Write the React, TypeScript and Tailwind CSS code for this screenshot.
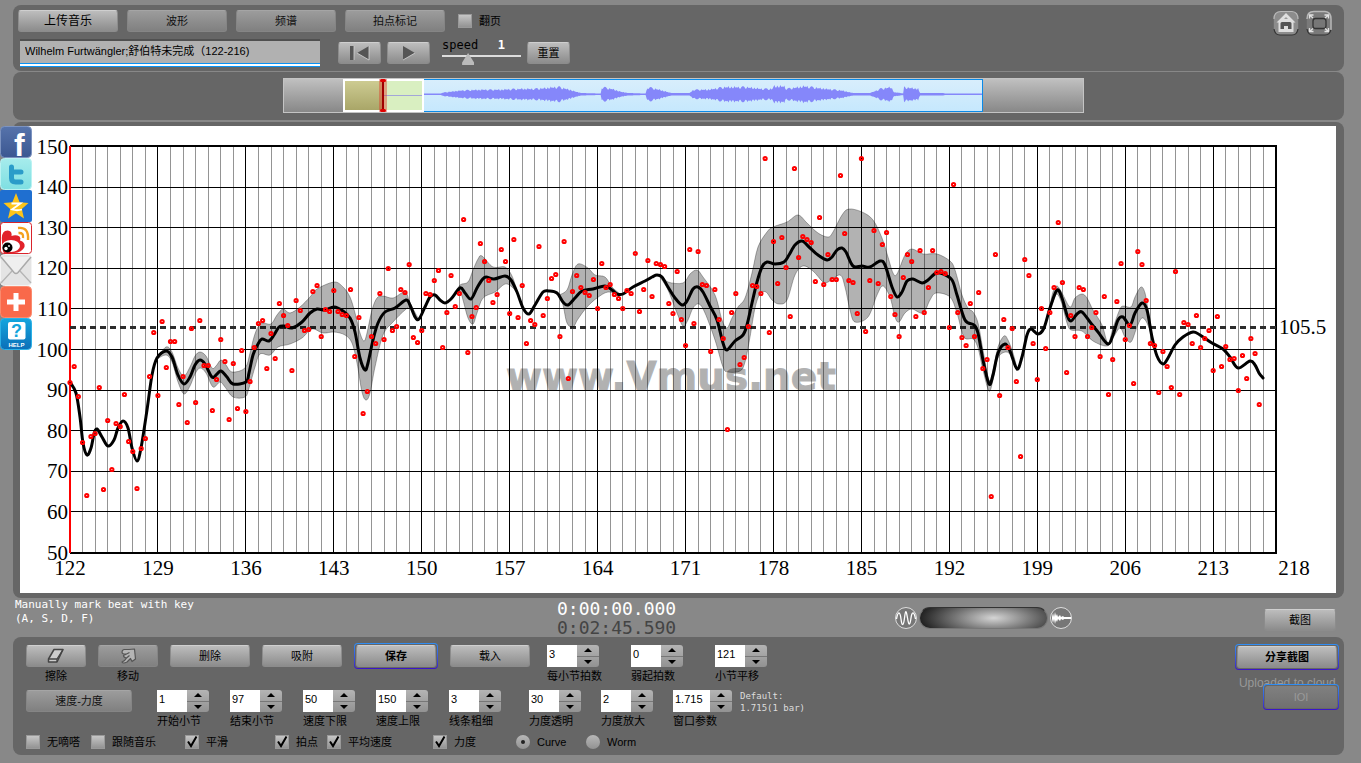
import type { ReactNode } from "react"

type Point = [number, number]

const BEAT_WIDTH = 12.5625 / 3

// one value per beat, three beats per bar
const beats = [
  382, 366, 396, 442, 495, 436, 433, 387, 489, 420, 469, 423, 426, 394, 441, 451, 488, 448, 438, 376,
  332, 395, 321, 367, 341, 341, 404, 376, 422, 328, 402, 320, 365, 365, 410, 379, 339, 361, 419, 363,
  408, 350, 411, 381, 347, 323, 320, 368, 333, 358, 303, 315, 325, 370, 300, 310, 330, 329, 291, 285,
  336, 309, 311, 290, 311, 314, 315, 289, 356, 317, 413, 391, 336, 343, 293, 339, 268, 330, 326, 289,
  292, 264, 337, 342, 330, 293, 294, 280, 270, 347, 312, 275, 306, 293, 219, 352, 316, 307, 243, 261,
  280, 302, 294, 249, 261, 313, 239, 317, 285, 343, 320, 324, 246, 315, 298, 278, 274, 336, 241, 378,
  291, 275, 287, 292, 295, 279, 308, 263, 287, 284, 294, 298, 308, 290, 293, 253, 311, 289, 260, 296,
  263, 264, 266, 303, 313, 271, 319, 345, 249, 323, 251, 284, 285, 351, 289, 319, 338, 429, 312, 293,
  364, 357, 326, 285, 286, 293, 158, 332, 241, 283, 237, 267, 316, 168, 257, 236, 239, 242, 281, 217,
  284, 254, 279, 279, 175, 233, 280, 282, 313, 158, 331, 280, 230, 283, 244, 232, 296, 314, 336, 277,
  254, 261, 316, 250, 312, 287, 250, 272, 271, 273, 327, 184, 312, 337, 345, 303, 336, 292, 368, 359,
  496, 254, 395, 319, 347, 328, 381, 456, 259, 275, 343, 379, 308, 348, 312, 287, 222, 282, 372, 315,
  336, 287, 289, 336, 327, 312, 356, 296, 394, 359, 301, 263, 339, 325, 383, 251, 264, 300, 343, 345,
  392, 351, 366, 387, 271, 394, 322, 324, 343, 315, 347, 338, 330, 370, 316, 366, 346, 359, 358, 390,
  355, 378, 338, 353, 404,
]

const curve: Point[] = [
  [70, 382], [76, 393], [80, 417], [83, 443], [87, 455], [91, 448], [94, 434], [97, 429], [102, 437], [108, 446],
  [114, 440], [118, 428], [123, 421], [128, 428], [132, 448], [137, 461], [141, 448], [147, 410], [152, 375], [157, 358],
  [166, 351], [172, 357], [178, 375], [184, 384], [190, 377], [195, 365], [200, 360], [205, 364], [212, 377], [217, 374],
  [221, 371], [227, 377], [233, 384], [246, 382], [249, 373], [253, 355], [258, 344], [262, 339], [269, 341], [274, 335],
  [279, 327], [284, 326], [292, 328], [302, 322], [310, 313], [317, 309], [325, 310], [334, 307], [343, 311], [350, 318],
  [355, 332], [360, 358], [365, 370], [368, 363], [373, 340], [378, 323], [385, 312], [395, 308], [406, 300], [410, 305],
  [415, 317], [419, 319], [425, 307], [430, 297], [435, 295], [440, 300], [445, 303], [451, 299], [460, 288], [465, 293],
  [471, 299], [477, 288], [482, 280], [486, 277], [494, 279], [505, 276], [511, 280], [517, 292], [523, 308], [529, 314],
  [535, 305], [543, 292], [549, 291], [557, 293], [563, 302], [568, 305], [575, 298], [582, 291], [593, 289], [605, 286],
  [612, 290], [617, 294], [623, 294], [633, 287], [645, 281], [652, 277], [657, 275], [662, 277], [668, 287], [675, 298],
  [682, 305], [687, 301], [693, 289], [698, 287], [703, 292], [710, 306], [717, 320], [723, 343], [727, 350], [735, 341],
  [743, 335], [747, 325], [752, 303], [757, 282], [762, 267], [767, 262], [775, 264], [784, 262], [789, 255], [795, 245],
  [802, 241], [808, 246], [818, 255], [827, 260], [832, 257], [837, 250], [842, 248], [846, 252], [853, 266], [862, 266],
  [870, 267], [880, 261], [885, 265], [892, 287], [897, 297], [902, 292], [907, 281], [913, 279], [922, 283], [928, 280],
  [936, 273], [943, 274], [952, 280], [957, 295], [965, 320], [974, 325], [978, 333], [983, 360], [989, 384], [993, 375],
  [998, 353], [1005, 344], [1010, 351], [1017, 369], [1022, 357], [1027, 335], [1031, 329], [1038, 334], [1044, 328], [1050, 308],
  [1057, 290], [1062, 298], [1067, 315], [1071, 321], [1077, 314], [1082, 312], [1090, 322], [1098, 332], [1108, 344], [1113, 335],
  [1118, 320], [1123, 317], [1130, 325], [1135, 313], [1142, 303], [1147, 310], [1152, 337], [1157, 356], [1163, 364], [1168, 358],
  [1175, 345], [1183, 337], [1193, 332], [1200, 335], [1212, 343], [1223, 349], [1230, 357], [1238, 368], [1250, 361], [1255, 365],
  [1259, 373], [1263, 378],
]

// dynamics bands around the tempo curve
const bands: { upper: Point[]; lower: Point[] }[] = [
  {
    upper: [
      [157, 358], [166, 347], [172, 352], [178, 368], [184, 376], [190, 367], [195, 356], [200, 352], [206, 356], [212, 368],
      [216, 366], [221, 360], [226, 365], [232, 372], [245, 368], [250, 353], [254, 337], [258, 327], [263, 323], [271, 324],
      [277, 315], [283, 309], [290, 313], [300, 307], [310, 297], [317, 289], [334, 282], [343, 287], [350, 297], [355, 313],
      [360, 333], [364, 341], [367, 333], [372, 310], [377, 298], [383, 296], [393, 298], [405, 292], [410, 303], [418, 318],
    ],
    lower: [
      [157, 359], [166, 355], [172, 362], [178, 382], [184, 394], [190, 386], [195, 374], [200, 368], [206, 373], [213, 387],
      [220, 382], [225, 387], [233, 397], [245, 397], [249, 388], [255, 367], [260, 354], [270, 355], [278, 347], [290, 344],
      [302, 338], [312, 329], [323, 333], [334, 332], [345, 335], [352, 343], [357, 363], [362, 392], [366, 400], [370, 393],
      [375, 367], [383, 335], [393, 322], [405, 310], [410, 308], [418, 320],
    ],
  },
  {
    upper: [
      [455, 294], [460, 285], [468, 282], [473, 270], [478, 259], [482, 256], [493, 267], [505, 267], [512, 276], [517, 291],
    ],
    lower: [
      [455, 295], [460, 291], [463, 300], [468, 318], [473, 324], [477, 313], [483, 298], [495, 292], [505, 284], [512, 287], [517, 293],
    ],
  },
  {
    upper: [
      [559, 295], [567, 290], [572, 275], [578, 264], [588, 268], [595, 275], [605, 277], [612, 287], [620, 294],
    ],
    lower: [
      [559, 297], [563, 305], [567, 323], [573, 327], [578, 319], [587, 307], [597, 298], [608, 292], [620, 295],
    ],
  },
  {
    upper: [
      [660, 275], [668, 282], [683, 283], [690, 274], [697, 270], [703, 277], [715, 295], [722, 320], [727, 328], [732, 318],
      [738, 307], [745, 298], [752, 273], [758, 247], [767, 232], [773, 227], [787, 222], [798, 215], [807, 223], [818, 233],
      [828, 237], [833, 232], [842, 215], [849, 209], [862, 212], [873, 220], [882, 238], [888, 257], [893, 273], [897, 274],
      [905, 255], [912, 249], [923, 254], [937, 254], [950, 261], [955, 270], [962, 295], [968, 308], [973, 312], [978, 323],
      [983, 350], [989, 380], [993, 370], [998, 347], [1004, 336], [1008, 340], [1013, 353], [1017, 368],
    ],
    lower: [
      [660, 277], [668, 290], [677, 313], [683, 326], [688, 320], [693, 308], [699, 304], [705, 313], [715, 340], [723, 367],
      [728, 372], [740, 371], [745, 362], [750, 337], [755, 308], [760, 294], [766, 292], [772, 300], [779, 304], [787, 300],
      [795, 275], [803, 266], [813, 271], [823, 282], [828, 282], [840, 275], [845, 287], [850, 310], [855, 322], [868, 317],
      [877, 295], [883, 286], [890, 297], [895, 317], [899, 322], [905, 313], [912, 309], [923, 313], [930, 300], [936, 293],
      [950, 297], [957, 313], [964, 337], [973, 339], [978, 348], [983, 370], [989, 391], [993, 380], [998, 358], [1006, 352],
      [1012, 357], [1017, 371],
    ],
  },
  {
    upper: [
      [1050, 306], [1053, 292], [1057, 286], [1062, 293], [1070, 307], [1075, 298], [1082, 294], [1087, 298], [1093, 310], [1102, 325],
      [1108, 343], [1113, 328], [1120, 309], [1124, 306], [1131, 307], [1135, 297], [1141, 287], [1145, 293], [1148, 310], [1152, 335],
    ],
    lower: [
      [1050, 310], [1053, 302], [1057, 294], [1062, 304], [1067, 323], [1071, 330], [1082, 331], [1093, 341], [1107, 346], [1113, 338],
      [1120, 328], [1125, 337], [1131, 342], [1137, 327], [1142, 318], [1147, 323], [1152, 337],
    ],
  },
]

const envelope: Point[] = [
  [0, 0.5], [17, 0.5], [21, 2], [36, 4], [56, 5], [76, 5], [96, 6], [112, 6], [122, 7], [131, 8], [136, 8], [146, 5], [157, 1],
  [177, 0.5], [178, 8], [188, 6], [196, 3], [204, 1], [222, 0.5], [224, 8], [236, 5], [248, 1], [266, 1], [270, 5], [284, 5],
  [301, 8], [322, 8], [339, 6], [349, 6], [350, 9], [361, 9], [363, 6], [381, 9], [402, 6], [419, 4], [430, 1], [447, 1],
  [457, 6], [468, 8], [471, 2], [480, 0.5], [481, 8], [495, 6], [497, 1], [520, 1], [522, 0.5], [559, 0.5],
]

function spline(points: Point[]) {
  return points
    .slice(0, -1)
    .map((p1, i) => {
      const p0 = points[i - 1] ?? p1
      const p2 = points[i + 1]
      const p3 = points[i + 2] ?? p2
      const c1 = [p1[0] + (p2[0] - p0[0]) / 6, p1[1] + (p2[1] - p0[1]) / 6]
      const c2 = [p2[0] - (p3[0] - p1[0]) / 6, p2[1] - (p3[1] - p1[1]) / 6]
      return `C${c1.join(" ")} ${c2.join(" ")} ${p2.join(" ")}`
    })
    .join("")
}

function bandPath(upper: Point[], lower: Point[]) {
  const back = [...lower].reverse()
  return `M${upper[0].join(" ")}${spline(upper)}L${back[0].join(" ")}${spline(back)}Z`
}

function wavePath() {
  const tops: string[] = []
  const bottoms: string[] = []
  for (let x = 0; x <= 559; x++) {
    const next = envelope.findIndex((p) => p[0] >= x)
    const b = envelope[next]
    const a = envelope[next - 1] ?? b
    const t = b[0] === a[0] ? 0 : (x - a[0]) / (b[0] - a[0])
    const base = a[1] + (b[1] - a[1]) * t
    const jitter = ((x * x * 31 + x * 17) % 23) / 23
    const amp = base > 1.5 ? base * (0.65 + 0.35 * jitter) : base
    tops.push(`${x} ${(14 - amp).toFixed(1)}`)
    bottoms.unshift(`${x} ${(14.5 + amp).toFixed(1)}`)
  }
  return `M${tops.join("L")}L${bottoms.join("L")}Z`
}

const barX = (bar: number) => 70 + (bar - 122) * 12.5625
const tempoY = (bpm: number) => 146.5 + (150 - bpm) * 4.06

function TempoChart() {
  const bars = Array.from({ length: 95 }, (_, i) => 123 + i)
  const tempi = [50, 60, 70, 80, 90, 100, 110, 120, 130, 140, 150]
  const labels = [122, 129, 136, 143, 150, 157, 164, 171, 178, 185, 192, 199, 206, 213]

  return (
    <svg viewBox="20 126 1316 467" className="block h-auto w-full bg-white" role="img" aria-label="Tempo curve">
      <g stroke="#949494" strokeWidth="1" shapeRendering="crispEdges">
        {bars.map((bar) => (
          <line key={bar} x1={barX(bar)} x2={barX(bar)} y1="147" y2="552" />
        ))}
      </g>
      <g stroke="#000" strokeWidth="1" shapeRendering="crispEdges">
        {labels.slice(1).map((bar) => (
          <line key={bar} x1={barX(bar)} x2={barX(bar)} y1="147" y2="552" />
        ))}
        {tempi.map((bpm) => (
          <line key={bpm} x1="70" x2="1276" y1={tempoY(bpm)} y2={tempoY(bpm)} />
        ))}
      </g>
      <path d="M70 146H1276V553H70" fill="none" stroke="#000" strokeWidth="2" />
      <line x1="70" x2="70" y1="146" y2="553" stroke="#f00" strokeWidth="2" />

      <text
        x="506"
        y="390"
        fontSize="39"
        fontWeight="bold"
        fontFamily="'DejaVu Sans', sans-serif"
        fill="#000"
        stroke="#000"
        strokeWidth="1"
        opacity="0.3"
      >
        www.Vmus.net
      </text>
      <line x1="70" x2="1276" y1="327.5" y2="327.5" stroke="#2c2c2c" strokeWidth="3" strokeDasharray="6 4" />
      <g fill="#000" fillOpacity="0.3" stroke="#000" strokeOpacity="0.3" strokeWidth="1">
        {bands.map((band, i) => (
          <path key={i} d={bandPath(band.upper, band.lower)} />
        ))}
      </g>
      <path
        d={`M${curve[0].join(" ")}${spline(curve)}`}
        fill="none"
        stroke="#000"
        strokeWidth="3"
        strokeLinecap="round"
        strokeLinejoin="round"
      />
      <g fill="none" stroke="#f00" strokeWidth="2">
        {beats.map((y, i) => (
          <circle key={i} cx={70 + i * BEAT_WIDTH} cy={y + 0.5} r="1.6" />
        ))}
      </g>

      <g fontFamily="'Liberation Serif', serif" fontSize="21" fill="#000">
        {tempi.map((bpm) => (
          <text key={bpm} x="68" y={tempoY(bpm) + 7} textAnchor="end">
            {bpm}
          </text>
        ))}
        {labels.map((bar) => (
          <text key={bar} x={barX(bar)} y="575" textAnchor="middle">
            {bar}
          </text>
        ))}
        <text x="1294" y="575" textAnchor="middle">
          218
        </text>
        <text x="1279" y="334">
          105.5
        </text>
      </g>
    </svg>
  )
}

function Button({
  children,
  className = "w-20",
  dim = false,
  label,
}: {
  children: ReactNode
  className?: string
  dim?: boolean
  label?: string
}) {
  return (
    <button
      type="button"
      aria-label={label}
      className={`flex h-[22px] shrink-0 items-center justify-center rounded-[3px] border text-[11px] leading-none ${
        dim
          ? "border-[#858585] border-t-[#a5a5a5] bg-linear-to-b from-[#9c9c9c] to-[#808080] text-[#111]"
          : "border-[#8c8c8c] border-t-[#cfcfcf] bg-linear-to-b from-[#bdbdbd] to-[#8c8c8c] text-black"
      } ${className}`}
    >
      {children}
    </button>
  )
}

// blue focus frame that the emphasised buttons carry
function Framed({ children }: { children: ReactNode }) {
  return (
    <div className="-my-0.5 flex shrink-0 rounded-sm bg-linear-to-b from-[#2f8ff5] to-[#3a10c8] p-px">
      <div className="flex rounded-[3px] bg-[#666] p-px">{children}</div>
    </div>
  )
}

function Spinner({ label, value, wide = false }: { label: string; value: string; wide?: boolean }) {
  return (
    <div className={wide ? "w-[59px] shrink-0" : "w-[52px] shrink-0"}>
      <div className="flex h-[22px]">
        <input
          id={label}
          defaultValue={value}
          className="w-0 min-w-0 flex-1 bg-white px-0.5 pb-1 text-[11px] text-black outline-none"
        />
        <div className="flex w-[22px] flex-col overflow-hidden rounded-r-[3px] bg-linear-to-b from-[#b4b4b4] to-[#929292]">
          <button
            type="button"
            aria-label={`${label} +`}
            className="flex flex-1 items-center justify-center border-b border-[#777]"
          >
            <svg viewBox="0 0 8 4" className="h-1 w-2">
              <path d="M4 0L8 4H0z" />
            </svg>
          </button>
          <button type="button" aria-label={`${label} -`} className="flex flex-1 items-center justify-center">
            <svg viewBox="0 0 8 4" className="h-1 w-2">
              <path d="M4 4L8 0H0z" />
            </svg>
          </button>
        </div>
      </div>
      <label htmlFor={label} className="mt-px block text-[11px] leading-4 whitespace-nowrap text-black">
        {label}
      </label>
    </div>
  )
}

function Check({ label, checked = false, className = "" }: { label: string; checked?: boolean; className?: string }) {
  return (
    <label className={`flex shrink-0 items-center gap-[7px] text-[11px] leading-4 text-black ${className}`}>
      <span className="grid">
        <input
          type="checkbox"
          defaultChecked={checked}
          className="peer col-start-1 row-start-1 size-[14px] appearance-none border border-[#999] bg-linear-to-b from-[#c6c6c6] to-[#939393]"
        />
        <svg
          viewBox="0 0 14 14"
          className="pointer-events-none col-start-1 row-start-1 hidden size-[14px] peer-checked:block"
        >
          <path d="M3 6.5L6 11L11.5 1.5" fill="none" stroke="#000" strokeWidth="2" />
        </svg>
      </span>
      {label}
    </label>
  )
}

function Radio({ label, checked = false, className = "" }: { label: string; checked?: boolean; className?: string }) {
  return (
    <label className={`flex shrink-0 items-center gap-[7px] text-[11px] leading-4 text-black ${className}`}>
      <span className="grid place-items-center">
        <input
          type="radio"
          name="view"
          defaultChecked={checked}
          className="peer col-start-1 row-start-1 size-[14px] appearance-none rounded-full bg-linear-to-b from-[#b8b8b8] to-[#929292]"
        />
        <span className="pointer-events-none col-start-1 row-start-1 hidden size-1 rounded-full bg-[#222] peer-checked:block" />
      </span>
      {label}
    </label>
  )
}

function ShareBar() {
  return (
    <nav className="absolute top-[126px] left-0 flex flex-col">
      <a href="#facebook" aria-label="Facebook">
        <svg viewBox="0 0 32 32" className="block size-8">
          <defs>
            <linearGradient id="fb" x2="0" y2="1">
              <stop stopColor="#5673ab" />
              <stop offset="1" stopColor="#3b5791" />
            </linearGradient>
          </defs>
          <rect x="0.5" y="0.5" width="31" height="31" rx="4" fill="url(#fb)" stroke="#7c93c0" />
          <text x="14" y="30" fontSize="32" fontWeight="bold" fontFamily="'Liberation Sans', sans-serif" fill="#fff">
            f
          </text>
        </svg>
      </a>
      <a href="#twitter" aria-label="Twitter">
        <svg viewBox="0 0 32 32" className="block size-8">
          <defs>
            <linearGradient id="tw" x2="0" y2="1">
              <stop stopColor="#a6ecec" />
              <stop offset="1" stopColor="#7fdfe2" />
            </linearGradient>
          </defs>
          <rect x="0.5" y="0.5" width="31" height="31" rx="4" fill="url(#tw)" stroke="#b9f2f2" />
          <path
            d="M11.5 9V20Q11.5 24 15.5 24H21M11.5 14H21"
            fill="none"
            stroke="#2b9cc9"
            strokeWidth="5"
            strokeLinecap="round"
          />
        </svg>
      </a>
      <a href="#qzone" aria-label="Qzone">
        <svg viewBox="0 0 32 32" className="block size-8">
          <rect width="32" height="32" rx="2" fill="#1f6fd0" />
          <path d="M16 3L19.6 12.2L28.5 13L21.8 19L24 28.5L16 23.3L8 28.5L10.2 19L3.5 13L12.4 12.2Z" fill="#fcc419" />
          <path d="M11.5 13.5H20.5L12 19.5Q17 21 22 19.5" fill="none" stroke="#fff" strokeWidth="1.8" />
        </svg>
      </a>
      <a href="#weibo" aria-label="Weibo">
        <svg viewBox="0 0 32 32" className="block size-8">
          <rect x="0.5" y="0.5" width="31" height="31" rx="3" fill="#fff" stroke="#d9232b" />
          <path
            d="M2 20Q1 11 5 9Q9 7.5 11 10Q12 12 11.5 14Q16 12.5 19.5 14.5Q21 16 20 18.500Q25.500 20 24.500 25Q22 30.500 14 31H4Q2 29 2 20Z"
            fill="#e2222a"
          />
          <ellipse cx="11" cy="24" rx="9" ry="6" fill="#fff" />
          <circle cx="7.5" cy="25.5" r="5" fill="#000" />
          <circle cx="6" cy="26.5" r="1.7" fill="#fff" />
          <circle cx="9" cy="24" r="0.9" fill="#fff" />
          <path d="M18 6Q29 4.500 28 18M18.500 11Q24 10.500 23 16" fill="none" stroke="#f4a11d" strokeWidth="2.4" />
        </svg>
      </a>
      <a href="#mail" aria-label="Mail">
        <svg viewBox="0 0 32 32" className="block size-8">
          <rect x="0.5" y="0.5" width="31" height="31" rx="4" fill="#e4e4e4" stroke="#f3f3f3" />
          <path d="M1 29L12 17M31 29L20 17" stroke="#b5b5b5" strokeWidth="1.3" />
          <path d="M1 3L14 18.5Q16 20.5 18 18.5L31 3" fill="#efefef" stroke="#a9a9a9" strokeWidth="1.5" />
        </svg>
      </a>
      <a href="#more" aria-label="More">
        <svg viewBox="0 0 32 32" className="block size-8">
          <rect x="0.5" y="0.5" width="31" height="31" rx="4" fill="#f9694a" stroke="#fb8a6d" />
          <path d="M16 7V25M7 16H25" stroke="#fff" strokeWidth="5" />
        </svg>
      </a>
      <a href="#help" aria-label="Help">
        <svg viewBox="0 0 32 32" className="block size-8">
          <defs>
            <linearGradient id="hp" x2="0" y2="1">
              <stop stopColor="#14a6de" />
              <stop offset="1" stopColor="#0b6fb8" />
            </linearGradient>
          </defs>
          <rect x="0.5" y="0.5" width="31" height="31" rx="4" fill="url(#hp)" stroke="#2cb1e6" />
          <rect x="8" y="4" width="17.5" height="17.5" rx="2" fill="#fff" />
          <g fontFamily="'Liberation Sans', sans-serif" fontWeight="bold" textAnchor="middle">
            <text x="16.5" y="19" fontSize="18" fill="#12a5dc">
              ?
            </text>
            <text x="16.5" y="29" fontSize="6" fill="#fff">
              HELP
            </text>
          </g>
        </svg>
      </a>
    </nav>
  )
}

export default function App() {
  return (
    <div className="relative min-h-screen bg-[#888] pt-[5px] pr-[17px] pb-2 pl-[13px] font-['Liberation_Sans','Noto_Sans_CJK_SC',sans-serif]">
      {/* Toolbar */}
      <header className="flex h-[66px] items-start justify-between rounded-lg bg-[#666] pt-[5px] pr-3 pl-[5px]">
        <div>
          <div className="flex items-center gap-[9px]">
            <Button className="w-[100px] text-[12px]">上传音乐</Button>
            <Button className="w-[100px]" dim>
              波形
            </Button>
            <Button className="w-[100px]" dim>
              频谱
            </Button>
            <Button className="w-[100px]" dim>
              拍点标记
            </Button>
            <Check label="翻页" className="ml-1" />
          </div>
          <div className="mt-[7px] flex items-center pl-0.5">
            <div className="w-[300px] border-t-2 border-[#505050]">
              <input
                aria-label="曲目"
                defaultValue="Wilhelm Furtwängler;舒伯特未完成（122-216)"
                className="block h-[22px] w-full bg-[#b1b1b1] px-[5px] pb-1 text-[11px] text-black outline-none"
              />
              <div className="h-1 border-y border-[#0a93f5] bg-white" />
            </div>
            <Button className="ml-[18px] w-[43px]" label="回到开头">
              <svg viewBox="0 0 20 16" className="h-4 w-5">
                <path d="M0 1H4V15H0zM19 1V15L7 8z" fill="#555" />
                <path d="M4 1V15M19 1V15L7 8" fill="none" stroke="#d5d5d5" strokeWidth="0.8" />
              </svg>
            </Button>
            <Button className="ml-[6px] w-[43px]" label="播放">
              <svg viewBox="0 0 14 16" className="h-4 w-3.5">
                <path d="M1 1V15L13 8z" fill="#555" />
                <path d="M1 15L13 8" stroke="#d5d5d5" strokeWidth="0.8" />
              </svg>
            </Button>
            <div className="ml-3 w-[79px]">
              <div className="flex justify-between pr-4 font-['DejaVu_Sans_Mono',monospace] text-[12px] leading-3">
                <label htmlFor="speed" className="text-black">
                  speed
                </label>
                <output htmlFor="speed" className="font-bold text-white">
                  1
                </output>
              </div>
              <input
                id="speed"
                type="range"
                min="0"
                max="3"
                step="0.1"
                defaultValue="0.9"
                className="block h-4 w-full appearance-none bg-[linear-gradient(#ddd,#ddd)] bg-[length:100%_2px] bg-[position:0_4px] bg-no-repeat [&::-webkit-slider-thumb]:h-3 [&::-webkit-slider-thumb]:w-3 [&::-webkit-slider-thumb]:appearance-none [&::-webkit-slider-thumb]:bg-[#bbb] [&::-webkit-slider-thumb]:[clip-path:polygon(50%_0,100%_80%,100%_100%,0_100%,0_80%)]"
              />
            </div>
            <Button className="ml-[6px] w-[43px]">重置</Button>
          </div>
        </div>
        <div className="flex gap-[7px]">
          <button type="button" aria-label="主页">
            <svg viewBox="0 0 26 26" className="block size-[26px]">
              <rect x="0.8" y="1.5" width="24.4" height="23.5" rx="6" fill="#8c8c8c" />
              <path d="M1 19Q2 25 7 25H19Q24 25 25 19" fill="none" stroke="#333" strokeWidth="1.2" />
              <path d="M1 9Q1 1.500 8 1.500H19Q25 2 25 9" fill="none" stroke="#b8b8b8" strokeWidth="1.2" />
              <path d="M13 3L22.500 12.500H20.500V22H5.500V12.500H3.500Z" fill="#dedede" />
              <path d="M7.500 19V13.500Q7.500 12 9 12H17Q18.500 12 18.500 13.500V19H15V16H11V19Z" fill="#555" />
              <path d="M11 9L13 7L15 9Z" fill="#999" />
            </svg>
          </button>
          <button type="button" aria-label="全屏">
            <svg viewBox="0 0 26 26" className="block size-[26px]">
              <rect x="0.8" y="1.5" width="24.4" height="23.5" rx="6" fill="#7a7a7a" />
              <path d="M1 19Q2 25 7 25H19Q24 25 25 19" fill="none" stroke="#333" strokeWidth="1.2" />
              <path d="M1 9Q1 1.500 8 1.500H19Q25 2 25 9V20" fill="none" stroke="#b8b8b8" strokeWidth="1.5" />
              <rect x="7" y="8.5" width="13" height="10" rx="2.5" fill="#777" stroke="#333" strokeWidth="1.3" />
              <path
                d="M3.500 8.500V5H7.500M4 5.500L7 8M18.500 5H22.500V8.500M22 5.500L19 8M3.500 18V21.500H7.500M4 21L7 18.500M18.500 21.500H22.500V18M22 21L19 18.500"
                fill="none"
                stroke="#e2e2e2"
                strokeWidth="1.3"
              />
            </svg>
          </button>
        </div>
      </header>

      {/* Overview strip */}
      <section className="mt-px flex h-12 justify-center rounded-lg bg-[#666] py-[6px] pl-2.5">
        <div className="flex h-[35px] w-[801px] border border-[#c4c4c4] bg-linear-to-b from-[#c0c0c0] to-[#888]">
          <div className="ml-[59px] flex h-[33px] w-[81px] border-2 border-white">
            <div className="w-[38px] bg-linear-to-b from-[#cdcb92] to-[#a9a668]" />
            <div className="relative flex flex-1 items-center bg-[#d9efc1]">
              <div className="h-px w-full bg-[#a3a6d8]" />
              <div className="absolute -top-0.5 -left-1 flex h-[33px] w-2 flex-col items-center justify-between bg-[#e03020]/40">
                <div className="h-[3px] w-1.5 rounded-full bg-[#e00000]" />
                <div className="w-0.5 flex-1 bg-[#a00000]" />
                <div className="h-[3px] w-1.5 rounded-full bg-[#e00000]" />
              </div>
            </div>
          </div>
          <div className="h-[33px] w-[559px] border-y border-r border-[#0a8ae8] bg-linear-to-b from-[#d8eefc] to-[#c6e8fd]">
            <svg viewBox="0 0 559 31" className="block h-[31px] w-full" preserveAspectRatio="none">
              <path d={wavePath()} fill="#8587fa" />
            </svg>
          </div>
        </div>
      </section>

      {/* Chart */}
      <main className="mt-0.5 rounded-lg bg-[#666] pt-1 pr-2 pb-[5px] pl-[7px]">
        <TempoChart />
      </main>

      {/* Status */}
      <section className="flex h-[39px] items-start pr-2 pl-0.5 font-['DejaVu_Sans_Mono','Noto_Sans_CJK_SC',monospace]">
        <p className="w-[542px] shrink-0 text-[11px] leading-[14px] text-white">
          Manually mark beat with key
          <br />
          (A, S, D, F)
        </p>
        <p className="pt-px text-[18px] leading-[19px] text-white">
          0:00:00.000
          <br />
          <span className="text-[#444]">0:02:45.590</span>
        </p>
        <div className="ml-auto flex items-center gap-px pt-2">
          <svg viewBox="0 0 24 24" className="size-6">
            <circle cx="12" cy="12" r="10.5" fill="#777" stroke="#ddd" />
            <path
              d="M2.500 13C4 5 6 5 7 13S9.500 20 10.500 12S12 3 13.500 12S16 19 17 12S20 5 21.500 13"
              fill="none"
              stroke="#fff"
              strokeWidth="1.3"
            />
          </svg>
          <input
            type="range"
            aria-label="缩放"
            className="h-[22px] w-[129px] appearance-none rounded-full border border-[#777] border-t-[#333] bg-[radial-gradient(ellipse_76px_24px_at_58%_50%,#d5d5d5,#777_50%,#1c1c1c)] [&::-webkit-slider-thumb]:appearance-none"
          />
          <svg viewBox="0 0 24 24" className="size-6">
            <circle cx="12" cy="12" r="10.5" fill="#777" stroke="#ddd" />
            <path
              d="M3 11V13L4 17L5 13L6 18L7 14L8 16L9 13L11 15L12 13L14 14L15 13L22 13V11L15 11L14 10L12 11L11 9L9 11L8 8L7 10L6 6L5 11L4 7Z"
              fill="#fff"
            />
          </svg>
        </div>
        <div className="ml-[191px] pt-[11px]">
          <Button className="w-[72px]">截图</Button>
        </div>
      </section>

      {/* Controls */}
      <footer className="flex h-[118px] justify-between rounded-lg bg-[#666] pt-2 pr-[5px] pl-[13px]">
        <div>
          <div className="flex h-[45px] items-start gap-3">
            <div className="flex flex-col items-center gap-px">
              <Button className="w-[60px]" label="擦除">
                <svg viewBox="0 0 18 16" className="h-4 w-[18px]">
                  <path d="M7 1.500H16L10 14H1.500V11Z" fill="#ccc" stroke="#444" strokeWidth="1.5" strokeLinejoin="round" />
                  <path d="M1.500 11H10L16 1.500M10 11V14" fill="none" stroke="#444" strokeWidth="1.3" />
                </svg>
              </Button>
              <span className="text-[11px] leading-4 text-black">擦除</span>
            </div>
            <div className="flex flex-col items-center gap-px">
              <Button className="w-[60px]" label="移动" dim>
                <svg viewBox="0 0 18 16" className="h-4 w-[18px]">
                  <path
                    d="M5 1.500H10L15.500 1L16.500 11L13 13.500L11.500 10.500L8 14Q4 16 3 14Q6 13 7.500 10Q4.500 9.500 4.500 7.500L7.500 6Q3 6.500 3 4Q3 2 5 1.500ZM7.500 6L10.500 4.500M7.500 10L10.500 7.500"
                    fill="#b5b5b5"
                    stroke="#555"
                    strokeWidth="1.2"
                    strokeLinejoin="round"
                  />
                </svg>
              </Button>
              <span className="text-[11px] leading-4 text-black">移动</span>
            </div>
            <Button>删除</Button>
            <Button>吸附</Button>
            <Framed>
              <Button className="w-20 font-bold">保存</Button>
            </Framed>
            <Button>载入</Button>
            <div className="ml-[5px] flex gap-8">
              <Spinner label="每小节拍数" value="3" />
              <Spinner label="弱起拍数" value="0" />
              <Spinner label="小节平移" value="121" />
            </div>
          </div>

          <div className="flex h-11 items-start">
            <Button className="w-[106px]" dim>
              速度-力度
            </Button>
            <div className="ml-[25px] flex gap-[21px]">
              <Spinner label="开始小节" value="1" />
              <Spinner label="结束小节" value="97" />
              <Spinner label="速度下限" value="50" />
              <Spinner label="速度上限" value="150" />
              <Spinner label="线条粗细" value="3" />
            </div>
            <div className="ml-7 flex gap-5">
              <Spinner label="力度透明" value="30" />
              <Spinner label="力度放大" value="2" />
              <Spinner label="窗口参数" value="1.715" wide />
            </div>
            <p className="ml-2 font-['DejaVu_Sans_Mono',monospace] text-[9px] leading-3 text-[#ddd]">
              Default:
              <br />
              1.715(1 bar)
            </p>
          </div>

          <div className="flex items-center">
            <Check label="无嘀嗒" className="w-[65px]" />
            <Check label="跟随音乐" className="w-[94px]" />
            <Check label="平滑" className="w-[90px]" checked />
            <Check label="拍点" className="w-[52px]" checked />
            <Check label="平均速度" className="w-[106px]" checked />
            <Check label="力度" className="w-[83px]" checked />
            <Radio label="Curve" className="w-[70px]" checked />
            <Radio label="Worm" />
          </div>
        </div>

        <div className="flex flex-col items-end">
          <div className="flex pt-px">
            <Framed>
              <Button className="w-[100px] font-bold">分享截图</Button>
            </Framed>
          </div>
          <p className="mt-2 text-[12px] leading-[14px] whitespace-nowrap text-[#999]">Uploaded to cloud.</p>
          <div className="-mt-1.5 flex rounded-sm bg-linear-to-b from-[#2f8ff5] to-[#3a10c8] p-px">
            <div className="rounded-[3px] bg-[#666] p-px">
              <button
                type="button"
                disabled
                className="block h-[22px] w-[72px] rounded-[3px] bg-linear-to-b from-[#808080] to-[#707070] text-[11px] text-[#999]"
              >
                IOI
              </button>
            </div>
          </div>
        </div>
      </footer>

      <ShareBar />
    </div>
  )
}
